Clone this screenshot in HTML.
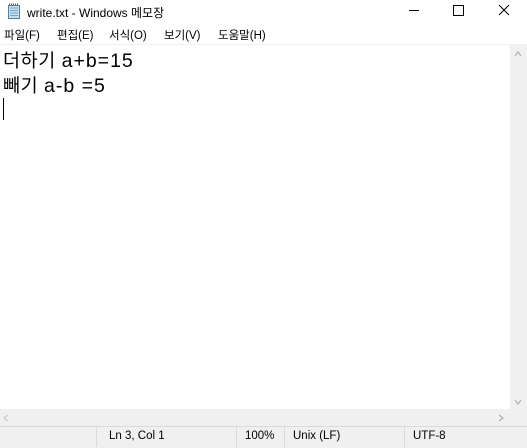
<!DOCTYPE html>
<html><head><meta charset="utf-8"><style>
body{margin:0;width:527px;height:447px;background:#fff;position:relative;overflow:hidden;font-family:"Liberation Sans","Noto Sans CJK KR",sans-serif;}
.abs{position:absolute;}
.title{left:27px;top:4px;font-size:12px;color:#000;}
.menu{top:27px;font-size:11.5px;color:#000;}
.txt{left:3px;font-size:18.5px;color:#000;white-space:pre;letter-spacing:0.6px;}
.lat{font-size:19.5px;letter-spacing:1px;}
.sb{font-size:11.5px;color:#000;top:430px;}
.sep{top:427px;width:1px;height:20px;background:#dadada;}
</style></head><body>
<svg class="abs" style="left:7px;top:3px" width="14" height="16" viewBox="0 0 14 16"><rect x="1.5" y="2.5" width="11" height="13" fill="#bfe2f5" stroke="#5a7f95"/><path d="M3 5h8M3 7.5h8M3 10h8M3 12.5h8" stroke="#7aa4bd"/><path d="M2 1.5h10" stroke="#4a6a80" stroke-width="2" stroke-dasharray="1 1"/></svg>
<div class="abs title">write.txt - Windows 메모장</div>
<div class="abs" style="left:409px;top:10px;width:10px;height:1px;background:#000"></div>
<div class="abs" style="left:453px;top:5px;width:9px;height:9px;border:1px solid #000"></div>
<svg class="abs" style="left:498px;top:4px" width="12" height="12"><path d="M1 1L11 11M11 1L1 11" stroke="#000" stroke-width="1"/></svg>
<div class="abs menu" style="left:4px">파일(F)</div>
<div class="abs menu" style="left:57px">편집(E)</div>
<div class="abs menu" style="left:109px">서식(O)</div>
<div class="abs menu" style="left:164px">보기(V)</div>
<div class="abs menu" style="left:218px">도움말(H)</div>
<div class="abs" style="left:0;top:44px;width:510px;height:1px;background:#f0f0f0"></div>
<div class="abs txt" style="top:47px">더하기 <span class="lat">a+b=15</span></div>
<div class="abs txt" style="top:72px">빼기 <span class="lat">a-b =5</span></div>
<div class="abs" style="left:3px;top:98px;width:1px;height:22px;background:#000"></div>
<div class="abs" style="left:510px;top:44px;width:17px;height:366px;background:#f0f0f0"></div>
<svg class="abs" style="left:513px;top:50px" width="10" height="8"><path d="M2 6L5 2L8 6" stroke="#a0a0a0" fill="none"/></svg>
<svg class="abs" style="left:513px;top:398px" width="10" height="8"><path d="M2 2L5 6L8 2" stroke="#a0a0a0" fill="none"/></svg>
<div class="abs" style="left:0;top:409px;width:510px;height:17px;background:#f0f0f0"></div>
<svg class="abs" style="left:2px;top:413px" width="8" height="10"><path d="M6 2L2 5L6 8" stroke="#c0c0c0" fill="none"/></svg>
<svg class="abs" style="left:497px;top:413px" width="8" height="10"><path d="M2 2L6 5L2 8" stroke="#a0a0a0" fill="none"/></svg>
<div class="abs" style="left:510px;top:409px;width:17px;height:17px;background:#f0f0f0"></div>
<div class="abs" style="left:0;top:426px;width:527px;height:21px;background:#f0f0f0;border-top:1px solid #dadada"></div>
<div class="abs sep" style="left:96px"></div>
<div class="abs sep" style="left:236px"></div>
<div class="abs sep" style="left:284px"></div>
<div class="abs sep" style="left:404px"></div>
<div class="abs sb" style="left:109px">Ln 3, Col 1</div>
<div class="abs sb" style="left:245px">100%</div>
<div class="abs sb" style="left:293px">Unix (LF)</div>
<div class="abs sb" style="left:413px">UTF-8</div>
</body></html>
